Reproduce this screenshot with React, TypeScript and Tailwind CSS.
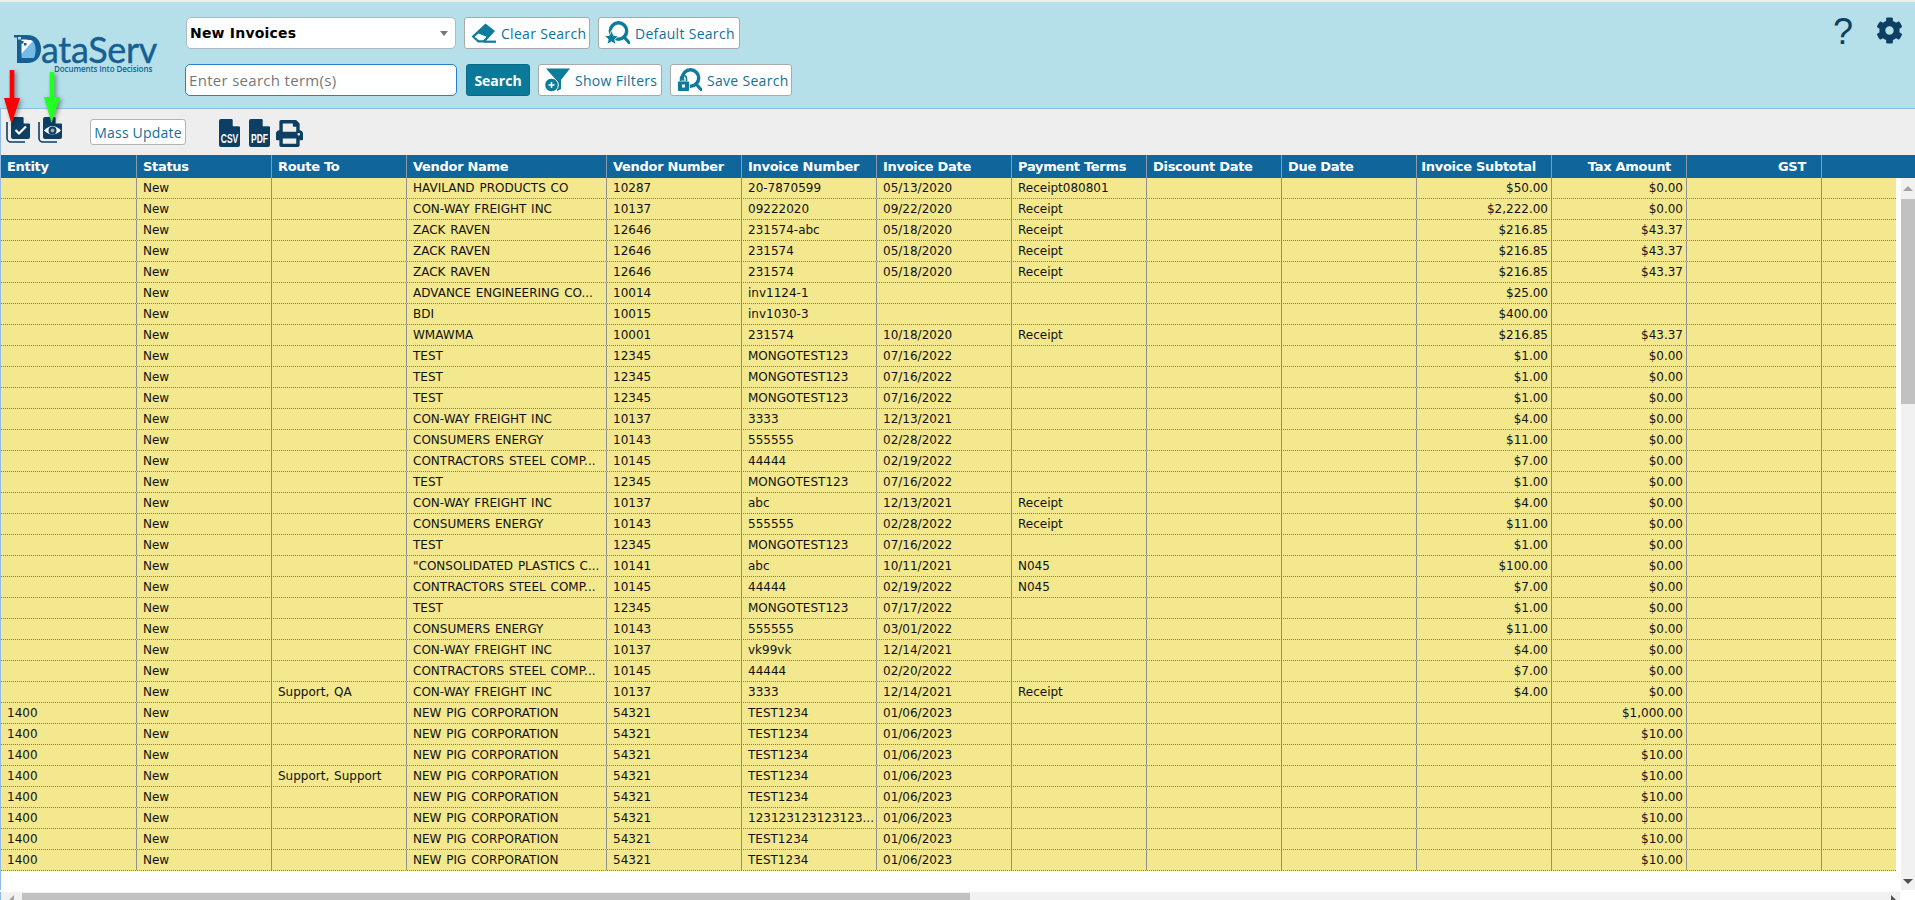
import React from "react";
import { FaCog, FaPrint } from "react-icons/fa";

const cols = "grid-cols-[136px_135px_135px_200px_135px_135px_135px_135px_135px_135px_135px_135px_135px_1fr]";
const heads: [string, boolean][] = [
  ["Entity", false], ["Status", false], ["Route To", false], ["Vendor Name", false], ["Vendor Number", false], ["Invoice Number", false], ["Invoice Date", false],
  ["Payment Terms", false], ["Discount Date", false], ["Due Date", false], ["Invoice Subtotal", true], ["Tax Amount", true], ["GST", true], ["", false],
];
const CW = "CON-WAY FREIGHT INC", CE = "CONSUMERS ENERGY", CS = "CONTRACTORS STEEL COMP...", NP = "NEW PIG CORPORATION", MT = "MONGOTEST123", TT = "TEST1234";
// entity, route, vendor, vnum, invnum, date, terms, subtotal, tax
const rows: string[][] = [
  ["", "", "HAVILAND PRODUCTS CO", "10287", "20-7870599", "05/13/2020", "Receipt080801", "$50.00", "$0.00"],
  ["", "", CW, "10137", "09222020", "09/22/2020", "Receipt", "$2,222.00", "$0.00"],
  ["", "", "ZACK RAVEN", "12646", "231574-abc", "05/18/2020", "Receipt", "$216.85", "$43.37"],
  ["", "", "ZACK RAVEN", "12646", "231574", "05/18/2020", "Receipt", "$216.85", "$43.37"],
  ["", "", "ZACK RAVEN", "12646", "231574", "05/18/2020", "Receipt", "$216.85", "$43.37"],
  ["", "", "ADVANCE ENGINEERING CO...", "10014", "inv1124-1", "", "", "$25.00", ""],
  ["", "", "BDI", "10015", "inv1030-3", "", "", "$400.00", ""],
  ["", "", "WMAWMA", "10001", "231574", "10/18/2020", "Receipt", "$216.85", "$43.37"],
  ["", "", "TEST", "12345", MT, "07/16/2022", "", "$1.00", "$0.00"],
  ["", "", "TEST", "12345", MT, "07/16/2022", "", "$1.00", "$0.00"],
  ["", "", "TEST", "12345", MT, "07/16/2022", "", "$1.00", "$0.00"],
  ["", "", CW, "10137", "3333", "12/13/2021", "", "$4.00", "$0.00"],
  ["", "", CE, "10143", "555555", "02/28/2022", "", "$11.00", "$0.00"],
  ["", "", CS, "10145", "44444", "02/19/2022", "", "$7.00", "$0.00"],
  ["", "", "TEST", "12345", MT, "07/16/2022", "", "$1.00", "$0.00"],
  ["", "", CW, "10137", "abc", "12/13/2021", "Receipt", "$4.00", "$0.00"],
  ["", "", CE, "10143", "555555", "02/28/2022", "Receipt", "$11.00", "$0.00"],
  ["", "", "TEST", "12345", MT, "07/16/2022", "", "$1.00", "$0.00"],
  ["", "", "\"CONSOLIDATED PLASTICS C...", "10141", "abc", "10/11/2021", "N045", "$100.00", "$0.00"],
  ["", "", CS, "10145", "44444", "02/19/2022", "N045", "$7.00", "$0.00"],
  ["", "", "TEST", "12345", MT, "07/17/2022", "", "$1.00", "$0.00"],
  ["", "", CE, "10143", "555555", "03/01/2022", "", "$11.00", "$0.00"],
  ["", "", CW, "10137", "vk99vk", "12/14/2021", "", "$4.00", "$0.00"],
  ["", "", CS, "10145", "44444", "02/20/2022", "", "$7.00", "$0.00"],
  ["", "Support, QA", CW, "10137", "3333", "12/14/2021", "Receipt", "$4.00", "$0.00"],
  ["1400", "", NP, "54321", TT, "01/06/2023", "", "", "$1,000.00"],
  ["1400", "", NP, "54321", TT, "01/06/2023", "", "", "$10.00"],
  ["1400", "", NP, "54321", TT, "01/06/2023", "", "", "$10.00"],
  ["1400", "Support, Support", NP, "54321", TT, "01/06/2023", "", "", "$10.00"],
  ["1400", "", NP, "54321", TT, "01/06/2023", "", "", "$10.00"],
  ["1400", "", NP, "54321", "123123123123123...", "01/06/2023", "", "", "$10.00"],
  ["1400", "", NP, "54321", TT, "01/06/2023", "", "", "$10.00"],
  ["1400", "", NP, "54321", TT, "01/06/2023", "", "", "$10.00"],
];

const TEAL = "#0d7c9b";
const NAVY = "#0c3f63";
const STAR = "M6.5 9.5 L8.6 14.4 L13.5 14.9 L9.8 18.3 L10.9 23.5 L6.5 20.8 L2.1 23.5 L3.2 18.3 L-0.5 14.9 L4.4 14.4 Z";

function EraserIcon() {
  return (
    <svg width="25" height="20" viewBox="0 0 25 20">
      <path d="M14.5 0.5 L24 8 L13.5 19.5 H7 L0.5 13.5 Z" fill={TEAL} />
      <path d="M7.5 10.5 L3.5 13.7 L8 17.3 H12.3 L15.5 13.8 Z" fill="#fff" />
      <rect x="13" y="17.6" width="12" height="2.2" fill={TEAL} />
    </svg>
  );
}
function Lens({ children }: { children?: React.ReactNode }) {
  return (
    <svg width="25" height="24" viewBox="0 0 25 24" fill="none">
      <circle cx="13.5" cy="10" r="8.2" stroke={TEAL} strokeWidth="3.4" />
      <path d="M19 16 L24 21.5" stroke={TEAL} strokeWidth="3.2" strokeLinecap="round" />
      {children}
    </svg>
  );
}
function FilterIcon() {
  return (
    <svg width="25" height="24" viewBox="0 0 25 24">
      <path d="M1 0.5 H25 L16 12 V21 L12 23 V13 Z" fill={TEAL} />
      <circle cx="6.5" cy="17" r="6.8" fill={TEAL} stroke="#fff" strokeWidth="1" />
      <path d="M3.5 17 H9.5 M6.5 14 V20" stroke="#fff" strokeWidth="1.5" />
    </svg>
  );
}
function CheckStack() {
  return (
    <svg width="25" height="27" viewBox="0 0 25 27">
      <path d="M1 5 V21 a4 4 0 0 0 4 4 H19" fill="none" stroke={NAVY} strokeWidth="1.6" />
      <path d="M5 2 a2 2 0 0 1 2 -2 H17 L24 7 V20 a2 2 0 0 1 -2 2 H7 a2 2 0 0 1 -2 -2 Z" fill={NAVY} />
      <path d="M17.6 0 V6.4 H24" fill="#eee" />
      <path d="M9.5 13 L13 16.5 L20 9.5" fill="none" stroke="#fff" strokeWidth="2.2" />
    </svg>
  );
}
function EyeStack() {
  return (
    <svg width="25" height="27" viewBox="0 0 25 27">
      <path d="M1 5 V21 a4 4 0 0 0 4 4 H19" fill="none" stroke={NAVY} strokeWidth="1.6" />
      <path d="M5 2 a2 2 0 0 1 2 -2 H17 L24 7 V20 a2 2 0 0 1 -2 2 H7 a2 2 0 0 1 -2 -2 Z" fill={NAVY} />
      <path d="M17.6 0 V6.4 H24" fill="#eee" />
      <path d="M6 13.5 Q14.5 4.5 23 13.5 Q14.5 21.5 6 13.5 Z" fill="#fff" />
      <circle cx="14.5" cy="13.5" r="4" fill={NAVY} />
      <circle cx="14.5" cy="13.5" r="2" fill="#9ab" />
    </svg>
  );
}
function FileLabel({ label }: { label: string }) {
  return (
    <svg width="21" height="28" viewBox="0 0 21 28">
      <path d="M2 0 H13 L21 8 V26 a2 2 0 0 1 -2 2 H2 a2 2 0 0 1 -2 -2 V2 a2 2 0 0 1 2 -2 Z" fill={NAVY} />
      <path d="M14 0 V7 H21 Z" fill="#eee" stroke="#eee" strokeWidth="0.6" />
      <g transform="translate(10.5 24) scale(0.9 1.35)">
        <text x="0" y="0" textAnchor="middle" fill="#fff" fontSize="9.5" fontWeight="700" fontFamily="'Liberation Sans',sans-serif">{label}</text>
      </g>
    </svg>
  );
}
function Btn({ icon, label, w }: { icon: React.ReactNode; label: string; w: string }) {
  return (
    <div className={`${w} h-[32px] flex items-center pl-[6px] gap-[5px] bg-white border border-[#a9a9a9] rounded-[3px] text-[14px] tracking-[0.3px] text-[#11709a] font-['Open_Sans',sans-serif]`}>
      {icon}
      <span>{label}</span>
    </div>
  );
}
function Arrow({ color, x, y, h }: { color: string; x: string; y: string; h: number }) {
  return (
    <svg className={`absolute ${x} ${y}`} width="18" height={h} viewBox={`0 0 18 ${h}`} style={{ filter: "drop-shadow(2px 2px 2px rgba(0,0,0,.4))" }}>
      <rect x="6.7" y="0" width="4.6" height={h - 24} fill={color} />
      <path d={`M1 ${h - 26} H17 L8.5 ${h} Z`} fill={color} />
    </svg>
  );
}

export default function App() {
  return (
    <div className="relative w-[1915px] h-[900px] overflow-hidden bg-white font-['Liberation_Sans',sans-serif]">
      <div className="h-[2px] bg-[#eeeeee]" />
      <header className="h-[107px] bg-[#b5e0e9] border-b border-[#90bbe6] flex">
        <div className="w-[185px] shrink-0 pt-[33px] pl-[14px]">
          <div className="flex items-center h-[28px] text-[#155f93]">
            <svg width="27" height="28" viewBox="0 0 27 28" className="shrink-0">
              <path d="M3 0 H13 C22 0 27 6 27 14 C27 22 22 28 13 28 H3 Z" fill="#155f93" />
              <path d="M7.5 19 L19 6 C22 10 22.5 17 20 23 H7.5 Z" fill="#74bce8" />
              <path d="M7.5 19 L19 6 C17 5 14 4.5 7.5 4.5 Z" fill="#fff" />
              <rect x="0" y="0" width="3" height="2.5" fill="#155f93" />
              <rect x="4" y="2" width="3" height="2.5" fill="#b5e0e9" />
              <rect x="3" y="5" width="3" height="2.5" fill="#155f93" />
              <rect x="7" y="6" width="2.5" height="2.5" fill="#155f93" />
              <rect x="10" y="8" width="2.5" height="2.5" fill="#155f93" />
            </svg>
            <span className="text-[36px] leading-[28px] tracking-[-0.3px] [-webkit-text-stroke:0.4px_#155f93] font-['Lato',sans-serif]">ataServ</span>
          </div>
          <div className="pl-[40px] text-[8px] leading-[11px] tracking-[-0.1px] font-semibold text-[#155f93] font-['Open_Sans',sans-serif] whitespace-nowrap">Documents Into Decisions</div>
        </div>
        <div className="flex flex-col pt-[15px] gap-[15px]">
          <div className="flex items-center gap-[8px]">
            <div className="w-[270px] h-[32px] ml-[1px] bg-white rounded-[5px] border border-[#b0b8c4] flex items-center justify-between pl-[3px] pr-[7px]">
              <span className="text-[14px] font-bold tracking-[0.2px] text-black font-['DejaVu_Sans',sans-serif]">New Invoices</span>
              <span className="w-0 h-0 border-x-[4px] border-x-transparent border-t-[5px] border-t-[#777]" />
            </div>
            <Btn w="w-[126px]" label="Clear Search" icon={<EraserIcon />} />
            <Btn w="w-[142px]" label="Default Search" icon={
              <Lens><path d={STAR} fill={TEAL} stroke="#fff" strokeWidth="0.8" /></Lens>
            } />
          </div>
          <div className="flex items-center gap-[8px]">
            <div className="w-[272px] h-[32px] bg-white rounded-[5px] border border-[#2a7ec4] flex items-center pl-[3px] text-[15px] text-[#777] font-['Open_Sans',sans-serif] tracking-[0.3px]">Enter search term(s)</div>
            <div className="w-[64px] h-[32px] ml-[1px] bg-[#0b7a9a] rounded-[3px] border border-[#0a6a88] flex items-center justify-center text-[14px] font-bold text-white font-['Open_Sans',sans-serif]">Search</div>
            <Btn w="w-[124px]" label="Show Filters" icon={<FilterIcon />} />
            <Btn w="w-[122px]" label="Save Search" icon={
              <Lens><rect x="0.5" y="13" width="12" height="10.5" rx="1.5" fill={TEAL} stroke="#fff" strokeWidth="0.8" /><path d="M3.5 13 V10.5 a3 3 0 0 1 6 0 V13" stroke={TEAL} strokeWidth="1.6" /><rect x="5" y="16.5" width="3" height="3" fill="#fff" /></Lens>
            } />
          </div>
        </div>
        <div className="ml-auto flex items-start pt-[10px] pr-[12px] gap-[23px] text-[#0c3f63]">
          <span className="text-[36px] leading-[40px] font-['Liberation_Sans',sans-serif]">?</span>
          <FaCog size={27} className="mt-[5px]" />
        </div>
      </header>

      <div className="h-[46px] bg-[#eeeeee] border-l border-[#90bbe6] flex items-center pl-[5px]">
        <div className="flex items-center gap-[7px] mb-[4px]"><CheckStack /><EyeStack /></div>
        <div className="ml-[27px] w-[96px] h-[26px] bg-white border border-[#b3b3b3] rounded-[3px] flex items-center justify-center text-[14px] tracking-[0.2px] text-[#11709a] font-['Open_Sans',sans-serif]">Mass Update</div>
        <div className="ml-[33px] mt-[2px]"><FileLabel label="CSV" /></div>
        <div className="ml-[9px] mt-[2px]"><FileLabel label="PDF" /></div>
        <FaPrint size={27} className="ml-[6px] mt-[2px] text-[#0c3f63]" />
      </div>

      <div className={`grid ${cols} h-[23px] bg-[#10669a] border-l border-[#90bbe6] text-white text-[13px] font-bold font-['DejaVu_Sans',sans-serif] tracking-[-0.3px]`}>
        {heads.map(([h, right], i) => (
          <div key={i} className={`leading-[24px] whitespace-nowrap overflow-hidden ${i < 13 ? "border-r border-[#8a9aa6]" : ""} ${right ? "text-right pl-0 pr-[15px]" : "px-[6px]"}`}>{h}</div>
        ))}
      </div>

      <div className="flex h-[712px]">
        <div className="w-[1896px] shrink-0 border-l border-[#90bbe6]">
          {rows.map((r, i) => {
            const cells = [r[0], "New", r[1], r[2], r[3], r[4], r[5], r[6], "", "", r[7], r[8], "", ""];
            return (
              <div key={i} className={`grid ${cols} h-[21px] bg-[#f3e88d] border-b border-dotted border-[#7b7b6a] text-[12px] [word-spacing:1px] text-[#111] font-['DejaVu_Sans',sans-serif]`}>
                {cells.map((c, j) => (
                  <div key={j} className={`leading-[20px] whitespace-nowrap overflow-hidden ${j < 13 ? "border-r border-[#909090]" : ""} ${j === 10 || j === 11 ? "text-right pl-0 pr-[3px]" : "px-[6px]"}`}>{c}</div>
                ))}
              </div>
            );
          })}
        </div>
        <div className="ml-[5px] w-[14px] flex flex-col items-center bg-[#f1f1f1]">
          <div className="h-[21px] w-full flex items-center justify-center"><span className="w-0 h-0 border-x-[5px] border-x-transparent border-b-[5px] border-b-[#a3a3a3]" /></div>
          <div className="h-[205px] w-full bg-[#c1c1c1]" />
          <div className="flex-1" />
          <div className="h-[17px] w-full flex items-center justify-center"><span className="w-0 h-0 border-x-[5px] border-x-transparent border-t-[5px] border-t-[#505050]" /></div>
        </div>
      </div>

      <div className="h-[10px] mt-[2px] flex bg-[#f1f1f1] border-l border-[#90bbe6] mr-[15px]">
        <div className="w-[21px] flex justify-center pt-[3px]"><span className="w-0 h-0 border-y-[5px] border-y-transparent border-r-[5px] border-r-[#a3a3a3]" /></div>
        <div className="w-[948px] h-[7px] mt-[1px] bg-[#c1c1c1]" />
        <div className="flex-1" />
        <div className="w-[14px] flex justify-center pt-[3px]"><span className="w-0 h-0 border-y-[5px] border-y-transparent border-l-[5px] border-l-[#505050]" /></div>
      </div>

      <Arrow color="#ff0000" x="left-[3px]" y="top-[70px]" h={54} />
      <Arrow color="#22ff22" x="left-[43px]" y="top-[72px]" h={51} />
    </div>
  );
}
